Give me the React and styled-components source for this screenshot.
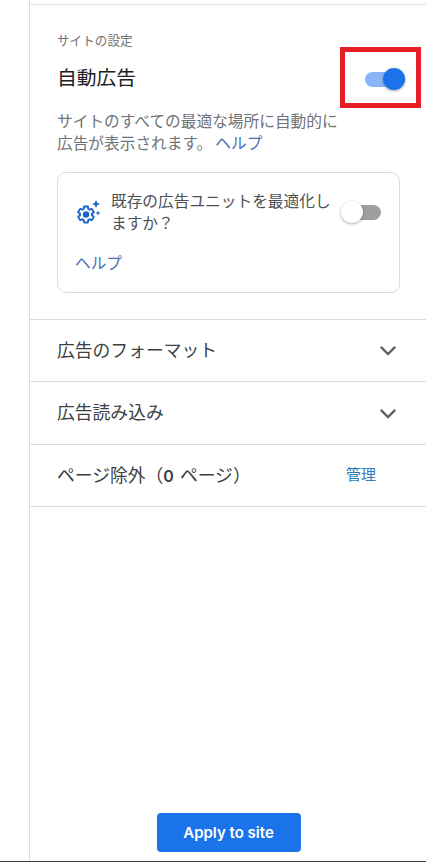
import React from "react";
import styled, { createGlobalStyle } from "styled-components";

const GlobalStyle = createGlobalStyle`
  html, body {
    margin: 0;
    padding: 0;
    background: #fff;
  }
  body {
    font-family: "Noto Sans CJK JP", "Noto Sans", sans-serif;
    color: #3c4043;
  }
`;

const Page = styled.div`
  width: 426px;
  height: 862px;
  box-sizing: border-box;
  border-bottom: 1px solid #3c4043;
  display: flex;
  overflow: hidden;
`;

const Panel = styled.div`
  margin-left: 29px;
  flex: 1;
  display: flex;
  flex-direction: column;
  border-left: 1px solid #dcdcdc;
  padding-top: 4px;
`;

const Top = styled.section`
  border-top: 1px solid #e0e0e0;
  padding: 25px 27px 26px 27px;
`;

const Label = styled.div`
  font-size: 12.6px;
  line-height: 20px;
  color: #6f7276;
`;

const TitleRow = styled.div`
  display: flex;
  align-items: center;
  justify-content: space-between;
  margin-top: 12px;
  position: relative;
`;

const Title = styled.h1`
  margin: 0;
  font-size: 19.8px;
  line-height: 30px;
  font-weight: 400;
  color: #202124;
`;

const Switch = styled.span`
  position: relative;
  flex: none;
  display: block;
  width: ${(p) => p.$width}px;
  height: 15px;
  border-radius: 8px;
  background: ${(p) => (p.$on ? "#8ab4f8" : "#9e9e9e")};
  margin: ${(p) => p.$top || 0}px ${(p) => p.$right}px 0 ${(p) => p.$left || 0}px;
`;

const Thumb = styled.span`
  position: absolute;
  top: -3.5px;
  width: 22px;
  height: 22px;
  border-radius: 50%;
  background: ${(p) => (p.$on ? "#1a73e8" : "#fff")};
  ${(p) => (p.$on ? "right: 0;" : "left: -6px;")}
  box-shadow: 0 1px 3px rgba(60, 64, 67, 0.45);
`;

const Marker = styled.div`
  position: absolute;
  left: 283px;
  top: -15px;
  width: 81px;
  height: 61px;
  box-sizing: border-box;
  border: 5px solid #e71e26;
  pointer-events: none;
`;

const Description = styled.div`
  margin-top: 18px;
  font-size: 15.7px;
  line-height: 22px;
  color: #6f7276;
`;

const DescriptionLine = styled.div`
  display: flex;
`;

const HelpLink = styled.a`
  color: #4a6fb5;
  margin-left: ${(p) => p.$left || 0}px;
`;

const Card = styled.div`
  margin-top: 18px;
  height: 121px;
  box-sizing: border-box;
  border: 1px solid #dadce0;
  border-radius: 9px;
  padding: 17px 18px 0 18px;
`;

const CardRow = styled.div`
  display: flex;
  align-items: center;
`;

const CardText = styled.div`
  width: 226px;
  margin: 0 9px;
  font-size: 15.7px;
  line-height: 22px;
  color: #4d5156;
`;

const CardHelp = styled.div`
  margin-top: 18px;
  margin-left: -1px;
  font-size: 15.7px;
  line-height: 22px;
`;

const Row = styled.div`
  height: ${(p) => p.$height}px;
  box-sizing: border-box;
  border-top: 1px solid #dcdcdc;
  border-bottom: ${(p) => (p.$last ? "1px solid #dcdcdc" : "none")};
  display: flex;
  align-items: center;
  justify-content: space-between;
  padding: 0 ${(p) => p.$right}px 0 27px;
`;

const RowText = styled.span`
  font-size: 17.8px;
  color: #3c4043;
  margin-bottom: 4px;
`;

const Count = styled.span`
  font-family: Inter, sans-serif;
  font-size: 16px;
  font-weight: 600;
  margin-right: 2px;
`;

const Manage = styled.a`
  font-size: 15px;
  color: #2b7bbd;
  margin-bottom: 4px;
`;

const Footer = styled.div`
  margin-top: auto;
  padding-bottom: 9px;
  display: flex;
  justify-content: center;
`;

const ApplyButton = styled.button`
  width: 144px;
  height: 39px;
  border: none;
  border-radius: 4px;
  background: #1a73e8;
  color: #fff;
  font-family: Inter, Roboto, sans-serif;
  font-size: 15px;
  font-weight: 600;
`;

const Chevron = () => (
  <svg width="20" height="13" viewBox="0 0 20 13" fill="none">
    <path d="M2.8 2.8 L10 10 L17.2 2.8" stroke="#5f6368" strokeWidth="2.4" />
  </svg>
);

const GearSpark = () => (
  <svg width="26" height="28" viewBox="0 0 26 28" fill="none">
    <g transform="translate(0.4 6.9) scale(0.8)">
      <path
        d="M19.43 12.98c.04-.32.07-.64.07-.98 0-.34-.03-.66-.07-.98l2.11-1.65c.19-.15.24-.42.12-.64l-2-3.46c-.12-.22-.39-.3-.61-.22l-2.49 1c-.52-.4-1.08-.73-1.69-.98l-.38-2.65C14.46 2.18 14.25 2 14 2h-4c-.25 0-.46.18-.49.42l-.38 2.65c-.61.25-1.17.59-1.69.98l-2.49-1c-.23-.09-.49 0-.61.22l-2 3.46c-.13.22-.07.49.12.64l2.11 1.65c-.04.32-.07.65-.07.98 0 .33.03.66.07.98l-2.11 1.65c-.19.15-.24.42-.12.64l2 3.46c.12.22.39.3.61.22l2.49-1c.52.4 1.08.73 1.69.98l.38 2.65c.03.24.24.42.49.42h4c.25 0 .46-.18.49-.42l.38-2.65c.61-.25 1.17-.59 1.69-.98l2.49 1c.23.09.49 0 .61-.22l2-3.46c.12-.22.07-.49-.12-.64l-2.11-1.65z"
        stroke="#1a67c9"
        strokeWidth="2.4"
      />
      <circle cx="12" cy="12" r="4" fill="#1a67c9" />
    </g>
    <path d="M20 2 L21.2 4.8 L24 6 L21.2 7.2 L20 10 L18.8 7.2 L16 6 L18.8 4.8 Z" fill="#1a67c9" />
    <path d="M22 12.5 L22.7 14.3 L24.5 15 L22.7 15.7 L22 17.5 L21.3 15.7 L19.5 15 L21.3 14.3 Z" fill="#1a67c9" />
  </svg>
);

export default function App() {
  return (
    <>
      <GlobalStyle />
      <Page>
        <Panel>
          <Top>
            <Label>サイトの設定</Label>
            <TitleRow>
              <Title>自動広告</Title>
              <Switch $on $width={40} $right={-5} $top={4}>
                <Thumb $on />
              </Switch>
              <Marker />
            </TitleRow>
            <Description>
              <DescriptionLine>サイトのすべての最適な場所に自動的に</DescriptionLine>
              <DescriptionLine>
                <span>広告が表示されます。</span>
                <HelpLink $left={3}>ヘルプ</HelpLink>
              </DescriptionLine>
            </Description>
            <Card>
              <CardRow>
                <GearSpark />
                <CardText>既存の広告ユニットを最適化しますか？</CardText>
                <Switch $width={34} $right={0} $left={1}>
                  <Thumb />
                </Switch>
              </CardRow>
              <CardHelp>
                <HelpLink>ヘルプ</HelpLink>
              </CardHelp>
            </Card>
          </Top>
          <Row $height={62} $right={29}>
            <RowText>広告のフォーマット</RowText>
            <Chevron />
          </Row>
          <Row $height={63} $right={29}>
            <RowText>広告読み込み</RowText>
            <Chevron />
          </Row>
          <Row $height={63} $right={51} $last>
            <RowText>
              ページ除外（<Count>0</Count> ページ）
            </RowText>
            <Manage>管理</Manage>
          </Row>
          <Footer>
            <ApplyButton>Apply to site</ApplyButton>
          </Footer>
        </Panel>
      </Page>
    </>
  );
}
